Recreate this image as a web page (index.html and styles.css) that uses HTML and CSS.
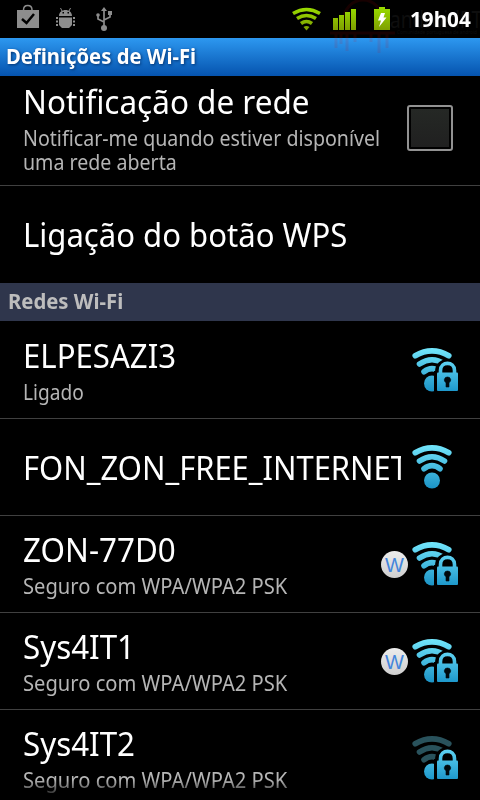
FILE: index.html
```html
<!DOCTYPE html>
<html lang="pt">
<head>
<meta charset="utf-8">
<title>Definições de Wi-Fi</title>
<link rel="stylesheet" href="styles.css">
</head>
<body>
<svg class="defs" width="0" height="0" aria-hidden="true">
  <defs>
    <linearGradient id="cyan" gradientUnits="userSpaceOnUse" x1="0" y1="0" x2="0" y2="46"><stop offset="0" stop-color="#75e8fd"/><stop offset="1" stop-color="#1890c4"/></linearGradient>
    <linearGradient id="lock" gradientUnits="userSpaceOnUse" x1="0" y1="14" x2="0" y2="45"><stop offset="0" stop-color="#5fd3f3"/><stop offset="1" stop-color="#1c96ca"/></linearGradient>
    <linearGradient id="green" gradientUnits="userSpaceOnUse" x1="0" y1="6" x2="0" y2="31"><stop offset="0" stop-color="#9be000"/><stop offset="1" stop-color="#7d9c00"/></linearGradient>
    <g id="arcs" fill="none" stroke-width="5.600" stroke-linecap="round">
      <path d="M3.200 8.700Q20 -.8 36.800 8.700"/><path d="M7.500 17Q20 8.500 32.500 17"/><path d="M12 24.700Q20 18.500 28 24.700"/>
    </g>
    <g id="padlock">
      <path d="M26 29V25C26 11.500 45 11.500 45 25V29" fill="#000" stroke="#000" stroke-width="6"/>
      <path d="M22 24H48V47H22Z" fill="#000"/>
      <path d="M28.500 29V23.500C28.500 14 42.500 14 42.500 23.500V29" fill="none" stroke="url(#lock)" stroke-width="3.600"/>
      <rect x="25" y="25.500" width="21" height="18.500" rx="1" fill="url(#lock)"/>
      <path d="M35.500 30a3 3 0 0 1 1.500 5.700V40H34V35.700A3 3 0 0 1 35.500 30Z" fill="#00090d" stroke="#00090d" stroke-width=".6"/>
    </g>
    <g id="secure"><use href="#arcs" stroke="url(#cyan)"/><circle cx="20" cy="36.500" r="8" fill="url(#cyan)"/><use href="#padlock"/></g>
    <g id="weak"><use href="#arcs" stroke="#29525c"/><circle cx="20" cy="36.500" r="8" fill="url(#lock)"/><use href="#padlock"/></g>
    <g id="open"><use href="#arcs" stroke="url(#cyan)"/><circle cx="20" cy="36.500" r="8" fill="url(#cyan)"/></g>
  </defs>
</svg>

<header class="status">
  <svg class="status-icons" width="480" height="54" viewBox="0 0 480 54">
    <g fill="#8d8d8d">
      <path d="M17 10H39V28H17Z"/><path d="M23.500 10C23.500 4 32 4 32 10" fill="none" stroke="#8d8d8d" stroke-width="1.500"/>
      <path d="M22 19L26.500 23L34 14" fill="none" stroke="#000" stroke-width="2.500"/>
      <path d="M59 16C59 8 72 8 72 16ZM59 17.500H72V25L69 28H62L59 25Z"/>
      <path d="M62 11L60.500 8M69 11L70.500 8" stroke="#8d8d8d"/>
      <path d="M56 17H58V19H56ZM56 20.500H58V22.500H56ZM56 24H58V26H56ZM73 17H75V19H73ZM73 20.500H75V22.500H73ZM73 24H75V26H73Z"/>
      <path d="M62.500 12H64V13.500H62.500ZM67.500 12H69V13.500H67.500Z" fill="#000"/>
      <path d="M104 28V10M104 22L98 19V15M104 20L110 17V13" fill="none" stroke="#8d8d8d" stroke-width="1.700"/>
      <path d="M104 7L107 11H101ZM108 11H112V15H108Z"/><circle cx="98" cy="15" r="1.800"/><circle cx="104" cy="28" r="3"/>
    </g>
    <g class="mark">
      <text x="390" y="28" font-size="24" textLength="92" lengthAdjust="spacingAndGlyphs">androidPT</text>
      <text x="397" y="34" font-size="5" textLength="80" lengthAdjust="spacingAndGlyphs">Comunidade portuguesa de android</text>
    </g>
    <g fill="none" stroke="#e00000" opacity=".1" stroke-width="3">
      <path d="M343 30V24C343 -8 383 -8 383 24V30"/><path d="M330 33H395M336 34V48M341 34V44M347 34V51M355 34V42M371 34V42M379 34V53M387 34V48"/>
    </g>
    <g fill="none" stroke="url(#green)" stroke-width="3.600">
      <path d="M293 13.500Q306.500 5.500 320 13.500"/><path d="M297 18.500Q306.500 12.500 316 18.500"/><path d="M301 23.500Q306.500 19.500 312 23.500"/>
    </g>
    <path d="M303.500 27Q306.500 25 309.500 27L306.500 30.500Z" fill="url(#green)"/>
    <path d="M333 18H338V30H333ZM339 15H344V30H339ZM345 12H350V30H345ZM351 9H356V30H351Z" fill="url(#green)"/>
    <path d="M379 7H385V9H390V30H374V9H379Z" fill="url(#green)"/>
    <path d="M381 13H385L383.500 17.500H386.500L379 27L381 20.500H378Z" fill="#fff"/>
  </svg>
  <time class="clock"><span class="fit" data-w="61">19h04</span></time>
</header>
<h1 class="titlebar"><span class="fit" data-w="190">Definições de Wi-Fi</span></h1>

<main>
  <section class="row first">
    <div class="text">
      <div class="name"><span class="fit" data-w="287">Notificação de rede</span></div>
      <div class="sub"><span class="fit" data-w="357">Notificar-me quando estiver disponível</span></div>
      <div class="sub second"><span class="fit" data-w="154">uma rede aberta</span></div>
    </div>
    <span class="checkbox"><span></span></span>
  </section>
  <section class="row wps"><div class="name"><span class="fit" data-w="324">Ligação do botão WPS</span></div></section>
  <h2 class="group"><span class="fit" data-w="115">Redes Wi-Fi</span></h2>
  <section class="row">
    <div class="text"><div class="name"><span class="fit" data-w="153">ELPESAZI3</span></div><div class="sub"><span class="fit" data-w="61">Ligado</span></div></div>
    <svg class="signal" width="50" height="48"><use href="#secure"/></svg>
  </section>
  <section class="row single">
    <div class="text clip"><div class="name"><span class="fit" data-w="385">FON_ZON_FREE_INTERNET</span></div></div>
    <svg class="signal" width="50" height="48"><use href="#open"/></svg>
  </section>
  <section class="row">
    <div class="text"><div class="name"><span class="fit" data-w="153">ZON-77D0</span></div><div class="sub"><span class="fit" data-w="264">Seguro com WPA/WPA2 PSK</span></div></div>
    <span class="badge">W</span><svg class="signal" width="50" height="48"><use href="#secure"/></svg>
  </section>
  <section class="row">
    <div class="text"><div class="name"><span class="fit" data-w="112">Sys4IT1</span></div><div class="sub"><span class="fit" data-w="264">Seguro com WPA/WPA2 PSK</span></div></div>
    <span class="badge">W</span><svg class="signal" width="50" height="48"><use href="#secure"/></svg>
  </section>
  <section class="row">
    <div class="text"><div class="name"><span class="fit" data-w="112">Sys4IT2</span></div><div class="sub fade"><span class="fit" data-w="264">Seguro com WPA/WPA2 PSK</span></div></div>
    <svg class="signal" width="50" height="48"><use href="#weak"/></svg>
  </section>
</main>
<script src="fit.js"></script>
</body>
</html>
```

FILE: styles.css
```css
* { box-sizing: border-box; }
html, body { margin: 0; height: 800px; overflow: hidden; background: #000; }
body { width: 480px; color: #fff; font-family: "Noto Sans", sans-serif; }
.defs { position: absolute; }
.status { position: relative; height: 38px; display: flex; align-items: center; justify-content: flex-end; padding-right: 9px; }
.status-icons { position: absolute; left: 0; top: 0; }
.mark { fill: #0e0e0e; }
.clock { position: relative; font-weight: 700; font-size: 21px; line-height: 38px; }
.fit { display: inline-block; white-space: nowrap; transform-origin: 0 50%; }
.titlebar { margin: 0; height: 38px; padding-left: 6px; font-size: 21px; line-height: 36px; font-weight: 700; background: linear-gradient(#2d98f0, #0553ae); text-shadow: 1px 1px 3px #04336f; }
.row { display: flex; height: 97px; padding: 12px 18px 0 23px; border-bottom: 1px solid #404040; }
.row.first { height: 110px; padding-top: 4px; }
.row.wps { height: 97px; border: 0; padding-top: 27px; }
.row.single { padding-top: 27px; }
.row:nth-of-type(3) { height: 98px; padding-top: 13px; }
.text { flex: 1; min-width: 0; }
.clip { flex: none; width: 378px; overflow: hidden; margin-right: 11px; }
.name { height: 44px; line-height: 44px; font-size: 33px; }
.sub { height: 24px; margin-top: 2px; line-height: 24px; font-size: 21px; color: #b5b5b5; }
.first .second { margin-top: 0; }
.fade { height: 32px; -webkit-mask-image: linear-gradient(#000 12px, transparent 31px); mask-image: linear-gradient(#000 12px, transparent 31px); }
.checkbox { width: 46px; height: 46px; margin: 25px 9px 0 0; padding: 2px; border: 2px solid #929292; border-radius: 3px; }
.checkbox span { display: block; height: 38px; background: linear-gradient(#252825, #202020); }
.group { margin: 0; height: 38px; padding-left: 8px; font-size: 21px; line-height: 36px; color: #bdbdbd; background: #2f364c; }
.signal { flex: none; align-self: flex-start; margin-top: 13px; }
.single .signal { margin-top: -2px; }
.badge { flex: none; width: 27px; height: 27px; margin: 23px 4px 0 0; border-radius: 50%; background: linear-gradient(#ececec, #cfcfcf); color: #4385dc; font: 20px/28px "Liberation Sans", sans-serif; text-align: center; }
```

FILE: fit.js
```js
document.querySelectorAll('.fit').forEach(function (el) {
  var natural = el.offsetWidth;
  el.style.width = el.dataset.w + 'px';
  el.style.transform = 'scaleX(' + el.dataset.w / natural + ')';
});
```
